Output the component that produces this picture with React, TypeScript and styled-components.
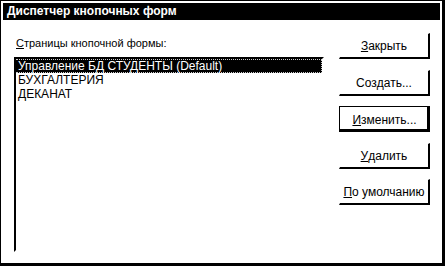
import styled, { createGlobalStyle } from "styled-components";

const GlobalStyle = createGlobalStyle`
  html, body {
    margin: 0;
    padding: 0;
    background: #fff;
  }
  body {
    font-family: "Liberation Sans", Arial, sans-serif;
    color: #000;
  }
`;

const Dialog = styled.div`
  box-sizing: border-box;
  width: 445px;
  height: 266px;
  border-style: solid;
  border-color: #000;
  border-width: 1px 3px 3px 1px;
  padding: 2px;
  display: flex;
  flex-direction: column;
  background: #fff;
`;

const TitleBar = styled.div`
  height: 17px;
  flex: none;
  background: #000;
  color: #fff;
  font-weight: bold;
  font-size: 12px;
  line-height: 17px;
  padding-left: 4px;
  white-space: nowrap;
`;

const Body = styled.div`
  flex: 1;
  display: flex;
  gap: 15px;
  padding: 0 10px 0 11px;
`;

const LeftColumn = styled.div`
  display: flex;
  flex-direction: column;
`;

const Label = styled.div`
  margin: 16px 0 7px 2px;
  font-size: 11px;
  line-height: 14px;
  white-space: nowrap;
`;

const ListBox = styled.div`
  box-sizing: border-box;
  width: 310px;
  height: 195px;
  border-style: solid;
  border-color: #000 #fff #fff #000;
  border-width: 2px;
  overflow: hidden;
`;

const ListItem = styled.div<{ $selected?: boolean }>`
  box-sizing: border-box;
  height: 14px;
  padding-left: 2px;
  font-size: 12px;
  line-height: 12px;
  white-space: nowrap;
  background: ${({ $selected }) => ($selected ? "#000" : "#fff")};
  color: ${({ $selected }) => ($selected ? "#fff" : "#000")};
  border: 1px dotted ${({ $selected }) => ($selected ? "#ccc" : "transparent")};
  border-left: 0;
`;

const ButtonColumn = styled.div`
  display: flex;
  flex-direction: column;
  gap: 10.5px;
  padding-top: 13px;
`;

const Button = styled.div<{ $default?: boolean }>`
  box-sizing: border-box;
  width: 91px;
  height: 26px;
  display: flex;
  align-items: center;
  justify-content: center;
  font-size: 12px;
  white-space: nowrap;
  background: #fff;
  border-style: solid;
  border-color: ${({ $default }) => ($default ? "#000" : "#fff #000 #000 #fff")};
  border-width: ${({ $default }) => ($default ? "1px" : "1px 2px 2px 1px")};
  box-shadow: ${({ $default }) => ($default ? "inset -2px -2px 0 #000" : "none")};
  padding-top: 1px;
`;

const items = ["Управление БД СТУДЕНТЫ (Default)", "БУХГАЛТЕРИЯ", "ДЕКАНАТ"];

export default function App() {
  return (
    <>
      <GlobalStyle />
      <Dialog>
        <TitleBar>Диспетчер кнопочных форм</TitleBar>
        <Body>
          <LeftColumn>
            <Label>
              <u>С</u>траницы кнопочной формы:
            </Label>
            <ListBox>
              {items.map((item, i) => (
                <ListItem key={item} $selected={i === 0}>
                  {item}
                </ListItem>
              ))}
            </ListBox>
          </LeftColumn>
          <ButtonColumn>
            <Button>
              <u>З</u>акрыть
            </Button>
            <Button>
              Соз<u>д</u>ать...
            </Button>
            <Button $default>
              <u>И</u>зменить...
            </Button>
            <Button>
              <u>У</u>далить
            </Button>
            <Button>
              <u>П</u>о умолчанию
            </Button>
          </ButtonColumn>
        </Body>
      </Dialog>
    </>
  );
}
